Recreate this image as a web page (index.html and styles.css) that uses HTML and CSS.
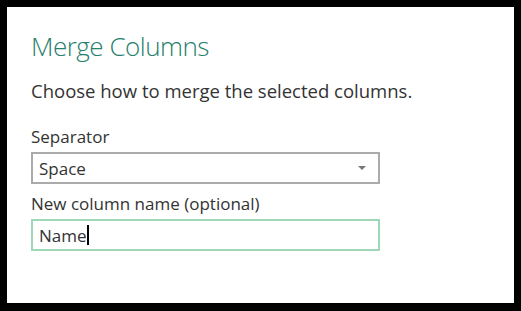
FILE: index.html
```html
<!DOCTYPE html>
<html lang="en">
<head>
    <meta charset="UTF-8">
    <meta name="viewport" content="width=device-width, initial-scale=1.0">
    <title>Merge Columns</title>
    <link rel="stylesheet" href="styles.css">
</head>
<body>
    <div class="dialog">
        <h1>Merge Columns</h1>
        <p class="subtitle">Choose how to merge the selected columns.</p>

        <div class="field">
            <label class="field-label">Separator</label>
            <div class="select">
                <span>Space</span>
                <span class="select-arrow"></span>
            </div>
        </div>

        <div class="field">
            <label class="field-label">New column name (optional)</label>
            <div class="text-input">
                <span>Name</span><span class="caret"></span>
            </div>
        </div>
    </div>
</body>
</html>
```

FILE: styles.css
```css
* {
    margin: 0;
    padding: 0;
    box-sizing: border-box;
}

html, body {
    height: 100%;
}

body {
    background: #000;
    padding: 7px 7px 8px 7px;
    font-family: "Open Sans", "Noto Sans", sans-serif;
    color: #333;
}

.dialog {
    background: #fff;
    height: 100%;
    padding: 20px 24px 0 24px;
}

h1 {
    font-size: 26px;
    line-height: 38px;
    font-weight: 300;
    letter-spacing: -0.5px;
    color: #25806d;
    margin-bottom: 14px;
}

.subtitle {
    font-size: 18.5px;
    line-height: 24px;
    margin-bottom: 23px;
}

.field {
    display: flex;
    flex-direction: column;
    width: 349px;
    margin-bottom: 9px;
}

.field-label {
    font-size: 17px;
    line-height: 22px;
    margin-bottom: 4px;
}

.select,
.text-input {
    height: 32px;
    border: 2px solid #ababab;
    display: flex;
    align-items: center;
    padding: 0 6px;
    font-size: 17px;
}

.select {
    justify-content: space-between;
}

.select-arrow {
    width: 0;
    height: 0;
    border-left: 4px solid transparent;
    border-right: 4px solid transparent;
    border-top: 4px solid #777;
    margin-right: 6px;
}

.text-input {
    border-color: #9fd8b7;
}

.caret {
    width: 2px;
    height: 20px;
    background: #000;
}
```
